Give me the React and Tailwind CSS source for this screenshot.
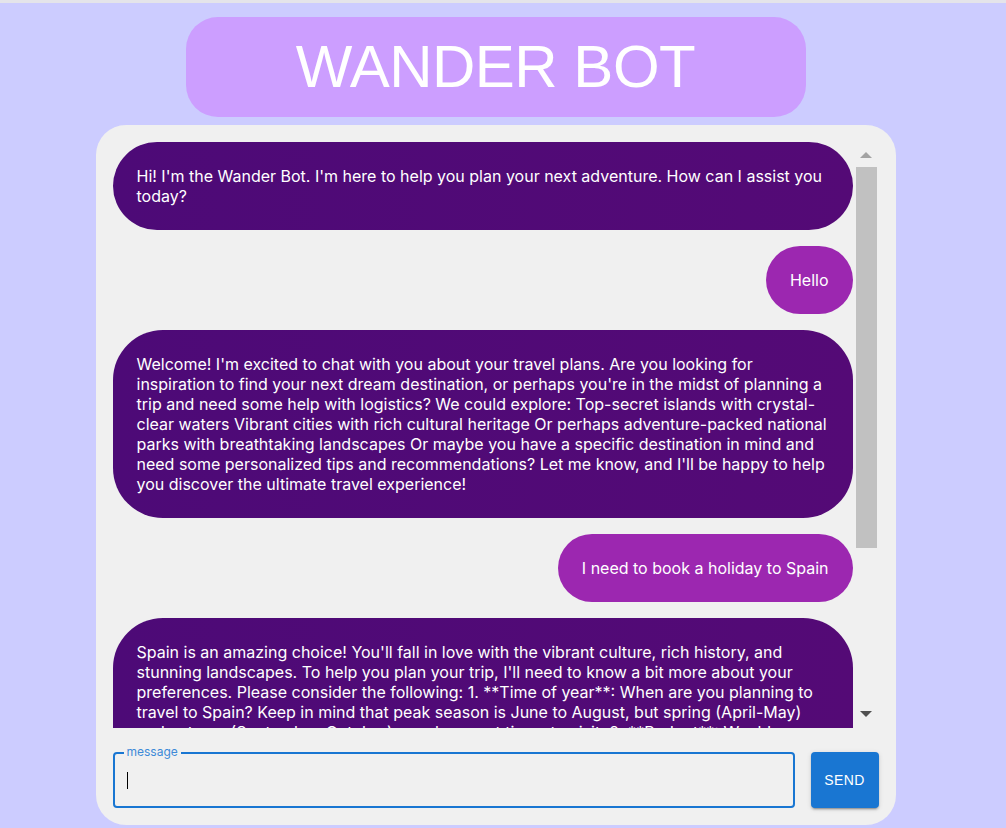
import React from 'react';

const messages = [
  {
    from: 'bot',
    text: "Hi! I'm the Wander Bot. I'm here to help you plan your next adventure. How can I assist you today?",
  },
  { from: 'user', text: 'Hello' },
  {
    from: 'bot',
    text: "Welcome! I'm excited to chat with you about your travel plans. Are you looking for inspiration to find your next dream destination, or perhaps you're in the midst of planning a trip and need some help with logistics? We could explore: Top-secret islands with crystal-clear waters Vibrant cities with rich cultural heritage Or perhaps adventure-packed national parks with breathtaking landscapes Or maybe you have a specific destination in mind and need some personalized tips and recommendations? Let me know, and I'll be happy to help you discover the ultimate travel experience!",
  },
  { from: 'user', text: 'I need to book a holiday to Spain' },
  {
    from: 'bot',
    text: "Spain is an amazing choice! You'll fall in love with the vibrant culture, rich history, and stunning landscapes. To help you plan your trip, I'll need to know a bit more about your preferences. Please consider the following: 1. **Time of year**: When are you planning to travel to Spain? Keep in mind that peak season is June to August, but spring (April-May) and autumn (September-October) are also great times to visit. 2. **Budget**: Would you like to travel on a budget, or are you looking for a luxury experience? 3. **Interests**: Are you interested in beaches, cities, food, history or nature?",
  },
];

const Bubble = ({ from, text }) => {
  const isBot = from === 'bot';
  return (
    <div className={isBot ? 'flex justify-start' : 'flex justify-end'}>
      <div
        className={
          isBot
            ? 'w-full rounded-[50px] bg-[linear-gradient(90deg,#4d0a77,#540a76)] px-6 py-6 text-[16px] leading-[20px] text-white'
            : 'rounded-[50px] bg-[#9c27b0] px-6 py-6 text-[16px] leading-[20px] text-white'
        }
      >
        {text}
      </div>
    </div>
  );
};

const App = () => {
  return (
    <div className="min-h-screen bg-[#ccccff] font-['Inter',sans-serif]">
      <div className="h-[3px] bg-[#e4e4ea]" />
      <div className="flex w-[991px] flex-col items-center pt-[14px]">
        <div className="flex h-[100px] w-[620px] items-center justify-center rounded-[32px] bg-[#cc9eff]">
          <h1 className="font-['Liberation_Sans',Arial,sans-serif] text-[60px] leading-none tracking-[-0.5px] text-white">
            WANDER BOT
          </h1>
        </div>

        <div className="mt-[8px] flex h-[700px] w-[800px] flex-col rounded-[30px] bg-[#f0f0f0] px-[17px] pt-[17px]">
          <div className="flex h-[586px] pr-[2px]">
            <div className="flex flex-1 flex-col gap-4 overflow-hidden">
              {messages.map((m, i) => (
                <Bubble key={i} from={m.from} text={m.text} />
              ))}
            </div>
            <div className="ml-[3px] flex w-[21px] flex-col items-center">
              <div className="mt-[10px] h-0 w-0 border-x-[6px] border-b-[6px] border-x-transparent border-b-[#a3a3a3]" />
              <div className="mt-[9px] h-[381px] w-full bg-[#c1c1c1]" />
              <div className="mt-[163px] h-0 w-0 border-x-[6px] border-t-[6px] border-x-transparent border-t-[#505050]" />
            </div>
          </div>

          <div className="mt-[24px] flex gap-4">
            <div className="relative flex h-[56px] flex-1 items-center rounded border-2 border-[#1976d2] pl-[12px]">
              <span className="absolute -top-[9px] left-[9px] bg-[#f0f0f0] px-[3px] text-[12px] leading-[14px] text-[#3d8ad8]">
                message
              </span>
              <span className="h-[17px] w-px bg-black" />
            </div>
            <button className="h-[56px] w-[68px] rounded bg-[#1976d2] font-['Liberation_Sans',Arial,sans-serif] text-[14px] uppercase tracking-[0.4px] text-white shadow-[0_3px_1px_-2px_rgba(0,0,0,0.2),0_2px_2px_0_rgba(0,0,0,0.14),0_1px_5px_0_rgba(0,0,0,0.12)]">
              Send
            </button>
          </div>
        </div>
      </div>
    </div>
  );
};

export default App;
